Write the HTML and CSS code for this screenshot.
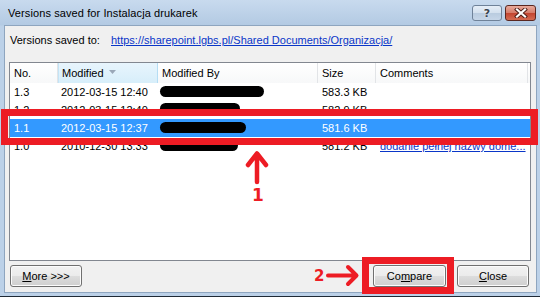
FILE: index.html
```html
<!DOCTYPE html>
<html lang="en">
<head>
    <meta charset="UTF-8">
    <title>Versions saved for Instalacja drukarek</title>
    <link rel="stylesheet" href="styles.css">
</head>
<body>
<div class="window">
    <div class="titlebar">
        <span class="title">Versions saved for Instalacja drukarek</span>
        <div class="caption_buttons">
            <span class="cap_btn help">?</span>
            <span class="cap_btn close">
                <svg width="14" height="10" viewBox="0 0 14 10">
                    <path d="M3 1.5 L11 8.5 M11 1.5 L3 8.5" stroke="#4a1a14" stroke-width="4" stroke-linecap="square"/>
                    <path d="M3 1.5 L11 8.5 M11 1.5 L3 8.5" stroke="#fff" stroke-width="2.2" stroke-linecap="square"/>
                </svg>
            </span>
        </div>
    </div>

    <div class="content">
        <div class="saved_to">
            <span class="saved_label">Versions saved to:</span>
            <a class="link" href="#">https://sharepoint.lgbs.pl/Shared Documents/Organizacja/</a>
        </div>

        <div class="list">
            <div class="row header">
                <div class="cell">No.</div>
                <div class="cell sorted">Modified
                    <svg class="sort_arrow" width="7" height="4" viewBox="0 0 7 4"><path d="M0 0 L7 0 L3.5 4 Z" fill="#9aa8b8"/></svg>
                </div>
                <div class="cell">Modified By</div>
                <div class="cell">Size</div>
                <div class="cell">Comments</div>
                <div class="cell"></div>
            </div>
            <div class="row">
                <div class="cell">1.3</div>
                <div class="cell date">2012-03-15 12:40</div>
                <div class="cell"><span class="redact" style="width: 104px"></span></div>
                <div class="cell">583.3 KB</div>
                <div class="cell"></div>
            </div>
            <div class="row">
                <div class="cell">1.2</div>
                <div class="cell date">2012-03-15 12:40</div>
                <div class="cell"><span class="redact low" style="width: 80px"></span></div>
                <div class="cell">582.9 KB</div>
                <div class="cell"></div>
            </div>
            <div class="row selected">
                <div class="cell">1.1</div>
                <div class="cell date">2012-03-15 12:37</div>
                <div class="cell"><span class="redact" style="width: 86px"></span></div>
                <div class="cell">581.6 KB</div>
                <div class="cell"></div>
            </div>
            <div class="row">
                <div class="cell">1.0</div>
                <div class="cell date">2010-12-30 13:33</div>
                <div class="cell"><span class="redact" style="width: 78px"></span></div>
                <div class="cell">581.2 KB</div>
                <div class="cell"><a class="link" href="#">dodanie pełnej nazwy dome...</a></div>
            </div>
        </div>

        <div class="footer">
            <button class="btn" type="button"><u>M</u>ore &gt;&gt;&gt;</button>
            <button class="btn compare" type="button">Co<u>m</u>pare</button>
            <button class="btn close_btn" type="button"><u>C</u>lose</button>
        </div>
    </div>

    <!-- annotations drawn over the dialog -->
    <div class="mark mark_row"></div>
    <svg class="arrow_up" width="25" height="35" viewBox="0 0 25 35">
        <path d="M3 15 L12 3.5 L21 15 M12 4 L12 32" stroke="#ed1c24" stroke-width="4.5" fill="none" stroke-linecap="round" stroke-linejoin="round"/>
    </svg>
    <span class="num num_1">1</span>
    <span class="num num_2">2</span>
    <svg class="arrow_right" width="34" height="23" viewBox="0 0 34 23">
        <path d="M2 11.5 L30 11.5 M22 3 L30.5 11.5 L22 20" stroke="#ed1c24" stroke-width="4" fill="none" stroke-linecap="round" stroke-linejoin="round"/>
    </svg>
    <div class="mark mark_btn"></div>
</div>
</body>
</html>
```

FILE: styles.css
```css
body{
    margin: 0;
    background: #fff;
    font-family: "Liberation Sans", Arial, sans-serif;
    font-size: 11px;
    color: #000;
}

.window{
    position: relative;
    width: 540px;
    height: 297px;
    box-sizing: border-box;
    display: flex;
    flex-direction: column;
    background: linear-gradient(#c8daee, #b3cae3 25px, #bcd1e8 26px, #bcd1e8);
    border-bottom: 1px solid #1f2a36;
    overflow: hidden;
}

.titlebar{
    height: 25px;
    display: flex;
    align-items: center;
    padding-left: 8px;
    flex-shrink: 0;
}
.title{
    font-size: 11px;
    letter-spacing: 0.1px;
}
.caption_buttons{
    margin-left: auto;
    margin-right: 4px;
    align-self: flex-start;
    margin-top: 5px;
    display: flex;
    gap: 3px;
}
.cap_btn{
    box-sizing: border-box;
    height: 16px;
    border-radius: 3px;
    display: flex;
    align-items: center;
    justify-content: center;
}
.help{
    width: 30px;
    border: 1px solid #6f8299;
    background: linear-gradient(#e6eef7, #d3e0ee 50%, #b9cbdf 50%, #c6d6e8);
    font-family: "DejaVu Sans", sans-serif;
    font-weight: bold;
    font-size: 11px;
    color: #3a4350;
    text-shadow: 0 0 2px #fff;
}
.close{
    width: 31px;
    border: 1px solid #5a2720;
    background: linear-gradient(#e8aa9c, #d57a68 50%, #c2432f 50%, #d46b52);
}

.content{
    flex: 1;
    margin: 0 3px 3px 4px;
    border: 1px solid #8ea5bf;
    background: #f0f0f0;
    display: flex;
    flex-direction: column;
}

.saved_to{
    display: flex;
    padding: 7px 0 0 5px;
    line-height: 15px;
}
.saved_label{
    width: 101px;
}
.link{
    color: #0a36c8;
    text-decoration: underline;
}

.list{
    margin: 14px 0 0 4px;
    width: 522px;
    height: 199px;
    box-sizing: border-box;
    border: 1px solid #828790;
    background: #fff;
    overflow: hidden;
}
.row{
    display: grid;
    grid-template-columns: 48px 100px 160px 58px 152px 1fr;
    height: 18px;
    align-items: center;
}
.cell{
    padding-left: 4px;
    white-space: nowrap;
    overflow: hidden;
    height: 100%;
    display: flex;
    align-items: center;
    box-sizing: border-box;
}
.cell.date{
    padding-left: 3px;
}
.header{
    height: 20px;
    background: linear-gradient(#ffffff, #f7f8f9);
}
.header .cell{
    border-right: 1px solid #e2e4e7;
}
.header .cell:last-child{
    border-right: none;
}
.header .sorted{
    background: linear-gradient(#e8f5fd, #d7eefa);
    border-left: 1px solid #c4e4f6;
    border-right: 1px solid #b5ddf4;
    padding-left: 3px;
}
.sort_arrow{
    margin-left: 5px;
    margin-bottom: 2px;
}
.selected{
    background: #3399ff;
    color: #fff;
}
.redact{
    display: inline-block;
    height: 11px;
    background: #000;
    border-radius: 6px;
    margin-left: -2px;
    margin-top: -2px;
}
.redact.low{
    margin-top: -4px;
}

.footer{
    display: flex;
    padding: 4px 7px 0 5px;
}
.btn{
    width: 72px;
    height: 22px;
    padding: 0;
    font: inherit;
    color: #000;
    border: 1px solid #707070;
    border-radius: 3px;
    background: linear-gradient(#f2f2f2, #ebebeb 50%, #dddddd 50%, #cfcfcf);
    box-shadow: inset 0 0 0 1px #fcfcfc;
}
.compare{
    margin-left: auto;
    width: 73px;
}
.close_btn{
    margin-left: 11px;
}

/* red annotation marks */
.mark{
    position: absolute;
    box-sizing: border-box;
    border: 7px solid #ed1c24;
}
.mark_row{
    left: 1px;
    top: 109px;
    width: 537px;
    height: 36px;
}
.mark_btn{
    left: 362px;
    top: 257px;
    width: 92px;
    height: 37px;
}
.arrow_up{
    position: absolute;
    left: 245px;
    top: 150px;
}
.arrow_right{
    position: absolute;
    left: 326px;
    top: 264px;
}
.num{
    position: absolute;
    font-family: "DejaVu Sans", sans-serif;
    font-weight: bold;
    color: #ed1c24;
    line-height: 1;
}
.num_1{
    left: 252px;
    top: 187px;
    font-size: 17px;
}
.num_2{
    left: 314px;
    top: 269px;
    font-size: 15px;
}
```
